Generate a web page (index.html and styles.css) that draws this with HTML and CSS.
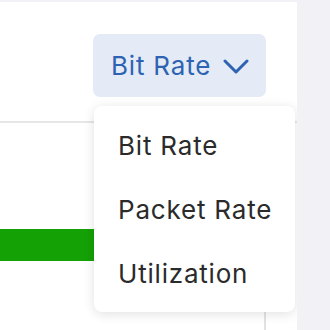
FILE: index.html
```html
<!DOCTYPE html>
<html lang="en">
<head>
  <meta charset="UTF-8" />
  <meta name="viewport" content="width=device-width, initial-scale=1.0" />
  <title>Traffic</title>
  <link rel="stylesheet" href="styles.css">
</head>
<body>
  <div class="card">
    <div class="toolbar">
      <button type="button" class="metric-btn">
        Bit Rate
        <svg class="chevron" width="26" height="16" viewBox="0 0 26 16">
          <path d="M2 2 L13 13 L24 2" fill="none" stroke="currentColor" stroke-width="3" stroke-linecap="round" stroke-linejoin="round"/>
        </svg>
      </button>
    </div>

    <div class="chart">
      <div class="gridline"></div>
      <div class="bar-row">
        <div class="bar"></div>
      </div>
      <div class="axis"></div>
    </div>

    <ul class="menu">
      <li>Bit Rate</li>
      <li>Packet Rate</li>
      <li>Utilization</li>
    </ul>
  </div>
</body>
</html>
```

FILE: styles.css
```css
body {
  margin: 0;
  padding-top: 2px;
  background: #f2f2f6;
  font-family: 'Inter', 'Noto Sans', sans-serif;
}

.card {
  position: relative;
  width: 297px;
  height: 328px;
  overflow: hidden;
  background: #ffffff;
}

.toolbar {
  display: flex;
  justify-content: flex-end;
  padding: 32px 31px 0 0;
}

.metric-btn {
  display: flex;
  align-items: center;
  gap: 12px;
  width: 173px;
  height: 63px;
  padding: 0 0 0 18px;
  border: none;
  border-radius: 7px;
  background: #e4ebf6;
  color: #2d63b2;
  font-family: inherit;
  font-size: 26px;
  letter-spacing: 0.8px;
  cursor: pointer;
}

.chevron {
  margin-top: 2px;
}

.chart {
  position: relative;
  height: 233px;
}

.gridline {
  margin-top: 24px;
  height: 2px;
  background: #e6e6e6;
}

.bar-row {
  padding-top: 106px;
}

.bar {
  width: 100px;
  height: 32px;
  background: #14a106;
}

.axis {
  position: absolute;
  left: 264px;
  top: 26px;
  bottom: 0;
  width: 2px;
  background: #e2e2e2;
}

.menu {
  position: absolute;
  left: 94px;
  top: 104px;
  width: 201px;
  margin: 0;
  padding: 8px 0 6px;
  list-style: none;
  background: #ffffff;
  border-radius: 8px;
  box-shadow: 0 2px 12px rgba(0, 0, 0, 0.12);
}

.menu li {
  height: 64px;
  line-height: 64px;
  padding-left: 24px;
  font-size: 26px;
  letter-spacing: 0.8px;
  color: #2b2b2b;
}
```
